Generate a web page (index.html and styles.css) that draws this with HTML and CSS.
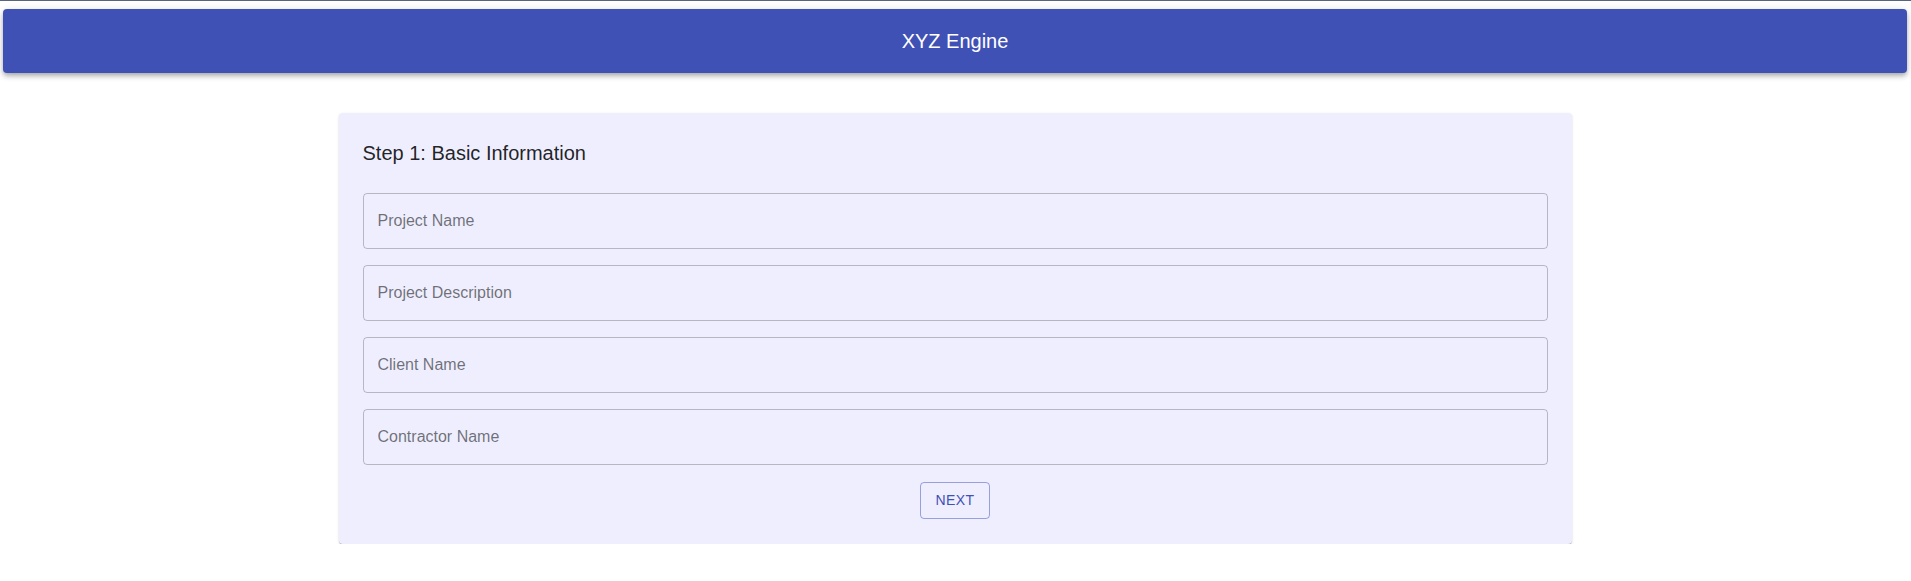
FILE: index.html
```html
<!DOCTYPE html>
<html lang="en">
<head>
<meta charset="utf-8">
<title>XYZ Engine</title>
<link rel="stylesheet" href="styles.css">
</head>
<body>
<div class="topline"></div>
<div class="page">
  <header class="appbar">
    <h1 class="appbar-title">XYZ Engine</h1>
  </header>
  <main class="card">
    <h2 class="card-title">Step 1: Basic Information</h2>
    <form class="form">
      <div class="field"><input class="field-input" type="text" placeholder="Project Name"></div>
      <div class="field"><input class="field-input" type="text" placeholder="Project Description"></div>
      <div class="field"><input class="field-input" type="text" placeholder="Client Name"></div>
      <div class="field"><input class="field-input" type="text" placeholder="Contractor Name"></div>
      <div class="actions"><button type="button" class="btn-outlined">Next</button></div>
    </form>
  </main>
</div>
</body>
</html>
```
FILE: styles.css
```css
* { box-sizing: border-box; }

html, body {
  margin: 0;
  padding: 0;
  background: #ffffff;
  font-family: "Liberation Sans", Arial, Helvetica, sans-serif;
}

.topline {
  height: 1px;
  background: #58647f;
}

.page {
  padding: 8px 4px 0 3px;
}

.appbar {
  height: 64px;
  background: #3f51b5;
  border-radius: 4px;
  display: flex;
  align-items: center;
  justify-content: center;
  box-shadow: 0px 2px 4px -1px rgba(0,0,0,0.2), 0px 4px 5px 0px rgba(0,0,0,0.14), 0px 1px 10px 0px rgba(0,0,0,0.12);
}

.appbar-title {
  margin: 0;
  color: #ffffff;
  font-size: 20px;
  font-weight: 400;
  line-height: 1.6;
}

.card {
  width: 1233px;
  margin: 40px auto 0;
  padding: 24px 24px 25px;
  background: #eeeefe;
  border-radius: 4px;
  box-shadow: 0px 2px 1px -1px rgba(0,0,0,0.2), 0px 1px 1px 0px rgba(0,0,0,0.14), 0px 1px 3px 0px rgba(0,0,0,0.12);
}

.card-title {
  margin: 0 0 24px;
  font-size: 20px;
  font-weight: 400;
  line-height: 32px;
  color: rgba(0,0,0,0.87);
}

.form {
  display: flex;
  flex-direction: column;
  gap: 16px;
}

.field-input {
  display: block;
  width: 100%;
  height: 56px;
  padding: 0 14px;
  border: 1px solid rgba(0,0,0,0.23);
  border-radius: 4px;
  background: transparent;
  font-family: inherit;
  font-size: 16px;
  color: rgba(0,0,0,0.87);
  outline: none;
}

.field-input::placeholder {
  color: rgba(0,0,0,0.55);
  opacity: 1;
}

.actions {
  display: flex;
  justify-content: center;
  padding-top: 1px;
}

.btn-outlined {
  min-width: 64px;
  height: 37px;
  padding: 5px 15px;
  border: 1px solid rgba(63,81,181,0.5);
  border-radius: 4px;
  background: transparent;
  color: #3f51b5;
  font-family: inherit;
  font-size: 14px;
  font-weight: 400;
  line-height: 1.75;
  letter-spacing: 0.02857em;
  text-transform: uppercase;
  cursor: pointer;
}
```
